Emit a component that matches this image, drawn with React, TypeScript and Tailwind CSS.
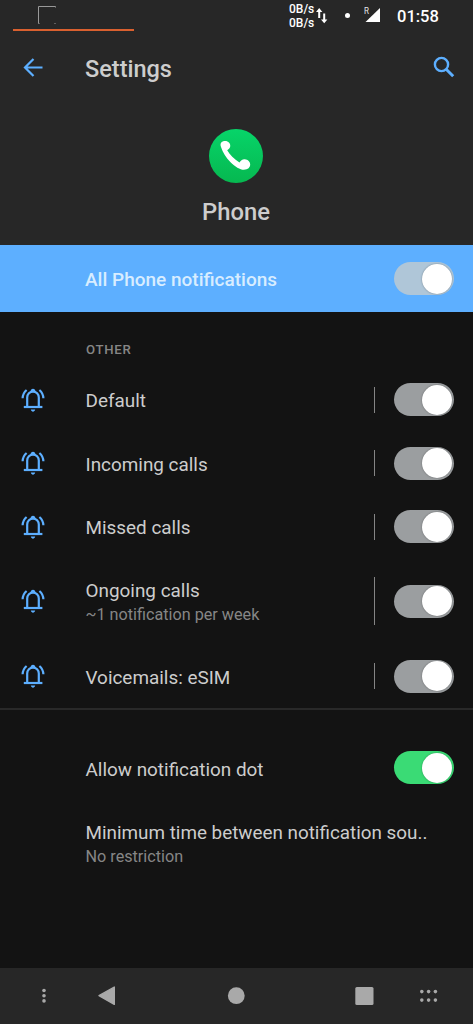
import clsx from "clsx";

interface Channel {
  title: string;
  summary?: string;
}

const channels: Channel[] = [
  { title: "Default" },
  { title: "Incoming calls" },
  { title: "Missed calls" },
  { title: "Ongoing calls", summary: "~1 notification per week" },
  { title: "Voicemails: eSIM" },
];

function Toggle({ track }: { track: string }) {
  return (
    <button
      role="switch"
      aria-checked="true"
      className={clsx("flex h-[33px] w-[60px] shrink-0 items-center justify-end rounded-full pr-[2px]", track)}
    >
      <span className="size-[30px] rounded-full bg-white shadow-[0_0_2px_rgba(0,0,0,0.35)]" />
    </button>
  );
}

function BellIcon() {
  return (
    <svg width="24" height="24" viewBox="0 0 24 24" fill="none" stroke="#5dafff" strokeWidth="2.2">
      <path d="M6.2 19V9.6a5.8 6 0 0 1 11.6 0V19" />
      <path d="M2.8 19h18.6" />
      <path d="M9.8 21.6h4.4c-.3 1.4-1.2 2.1-2.2 2.1s-1.9-.7-2.2-2.1z" fill="#5dafff" stroke="none" />
      <path d="M9.4 4c.2-2 1.2-3.200 2.600-3.200s2.400 1.200 2.600 3.200z" fill="#5dafff" stroke="none" />
      <path d="M1.600 10.200C1.800 6.800 3.200 4 5.600 2M22.400 10.200C22.200 6.800 20.800 4 18.400 2" />
    </svg>
  );
}

function StatusBar() {
  return (
    <div className="flex h-8 items-start text-white">
      <div className="ml-[13px] h-[31px] w-[121px] border-b-2 border-[#d9602f] pt-[6px] pl-[25px]">
        <svg width="18" height="18" viewBox="0 0 18 18" fill="none" stroke="#999" strokeWidth="1">
          <path d="M17.5 1.5V.5H.5v17h1M16.5 17.5h1" />
        </svg>
      </div>
      <div className="ml-[155px] w-[25px] pt-[3px] text-[12px] leading-[13.5px] font-medium">
        <div>0B/s</div>
        <div>0B/s</div>
      </div>
      <svg className="mt-2 ml-[2px]" width="12" height="16" viewBox="0 0 12 16" fill="none" stroke="#fff" strokeWidth="2">
        <path d="M3.2 10V2.500M8.200 5.500V13" />
        <path d="M0 4 3.200 0l3.200 4zM5 11.500l3.200 3.700 3.200-3.700z" fill="#fff" stroke="none" />
      </svg>
      <div className="mt-[13px] ml-[17px] size-[5px] rounded-full bg-white" />
      <div className="mt-[6px] ml-[14px] w-[5px] text-[9.500px] leading-[9px] text-gray-200">
        <span className="inline-block origin-left scale-x-[0.85]">R</span>
      </div>
      <svg className="mt-[8px] -ml-[4px]" width="15" height="15" viewBox="0 0 15 15">
        <path d="M15 0v14H.5z" fill="#fff" />
      </svg>
      <div className="mt-[7px] ml-[17px] text-[16.5px] leading-5 font-medium">01:58</div>
    </div>
  );
}

function ChannelRow({ title, summary }: Channel) {
  return (
    <div className={clsx("flex items-center pr-[19px] pl-[21px]", summary ? "h-[86px]" : "h-[63.5px]")}>
      <BellIcon />
      <div className={clsx("ml-[40.5px] flex-1", summary ? "pt-[4px]" : "pt-[3px]")}>
        <div className="text-[18.9px] leading-6">{title}</div>
        {summary && <div className="text-[16.2px] leading-6 text-[#868686]">{summary}</div>}
      </div>
      <div className={clsx("mr-[19px] w-[1.5px] bg-[#858585]", summary ? "h-12" : "h-[26px]")} />
      <Toggle track="bg-[#9b9ea0]" />
    </div>
  );
}

function NavBar() {
  return (
    <nav className="mt-auto h-[56.5px] bg-[#272727]">
      <svg width="473" height="56" viewBox="0 1 473 56" fill="#a9a9a9">
        {[23.5, 28.7, 33.9].map((y) => (
          <circle key={y} cx="44" cy={y} r="1.8" />
        ))}
        <path d="M99 28.7 114.3 20v17.4z" stroke="#a9a9a9" strokeWidth="1.4" strokeLinejoin="round" />
        <circle cx="236.3" cy="28.7" r="8.4" />
        <rect x="355.3" y="19.9" width="18.2" height="18" rx="1.5" />
        {[421.8, 428.6, 435.4].map((x) => (
          <g key={x}>
            <circle cx={x} cy="24.6" r="1.8" />
            <circle cx={x} cy="33.1" r="1.8" />
          </g>
        ))}
      </svg>
    </nav>
  );
}

export default function App() {
  return (
    <div className="flex h-screen flex-col overflow-hidden bg-[#131313] font-['Roboto',sans-serif] text-[#cdcdcd]">
      <header className="h-[245.4px] shrink-0 bg-[#272727]">
        <StatusBar />
        <div className="flex h-[72px] items-center pr-[18px] pl-[23px]">
          <svg width="20" height="20" viewBox="0 0 20 20" fill="none" stroke="#5dafff" strokeWidth="2.2">
            <path d="M19.5 9.5H2M10.5 1 2 9.5l8.5 8.5" />
          </svg>
          <h1 className="ml-[42px] flex-1 pt-px text-[23.5px] leading-7 font-medium">Settings</h1>
          <svg className="-mt-[3px]" width="22" height="22" viewBox="0 0 22 22" fill="none" stroke="#5dafff" strokeWidth="2.4">
            <circle cx="8.5" cy="8.5" r="6.6" />
            <path d="m13.2 13.2 7 7" strokeWidth="3" />
          </svg>
        </div>
        <div className="flex flex-col items-center pt-[24px]">
          <svg className="mr-[2px]" width="56" height="56" viewBox="0 0 56 56">
            <defs>
              <linearGradient id="dialer" x1="0" y1="0" x2="0" y2="1">
                <stop offset="0" stopColor="#07d469" />
                <stop offset="1" stopColor="#06b850" />
              </linearGradient>
            </defs>
            <circle cx="28" cy="28" r="27" fill="url(#dialer)" />
            <path
              d="M13 19C11.5 15 14 13 17 13c3.5 0 5.8 2.7 5.2 5.4-.3 1.8-1.8 2.8-3 3.8 2.4 4.5 7 9 12.3 12.3 1.1-2.1 3-3.4 5.3-3.2 3.2.2 5.4 2.6 5.4 5.2 0 2.8-2.2 5.2-6.3 5.2-4 0-8.7-2.9-13.6-7.8C17.8 29.5 14.8 24.2 13 19z"
              fill="#fff"
            />
          </svg>
          <div className="mt-[14px] mr-px text-[23.8px] leading-7 font-medium">Phone</div>
        </div>
      </header>

      <div className="flex h-[66.6px] shrink-0 items-center bg-[#5dafff] pr-[19px] pl-[85px]">
        <div className="flex-1 pt-[2px] text-[19px] leading-6 font-medium text-[#d8edff]">All Phone notifications</div>
        <Toggle track="bg-[#afc6d8]" />
      </div>

      <section className="shrink-0 border-b-2 border-[#292929]">
        <h2 className="h-[56px] pt-[28px] pl-[86px] text-[13.2px] leading-5 font-medium tracking-[0.7px] text-[#868686]">
          OTHER
        </h2>
        {channels.map((channel) => (
          <ChannelRow key={channel.title} {...channel} />
        ))}
      </section>

      <section className="shrink-0 pt-[26.5px]">
        <div className="flex h-[63px] items-center pr-[19px] pl-[85.5px]">
          <div className="flex-1 pt-[4px] text-[18.9px] leading-6">Allow notification dot</div>
          <Toggle track="bg-[#3adb75]" />
        </div>
        <div className="pt-[22px] pl-[85.5px]">
          <div className="text-[18.85px] leading-6 whitespace-nowrap">Minimum time between notification sou..</div>
          <div className="text-[16.2px] leading-6 text-[#868686]">No restriction</div>
        </div>
      </section>

      <NavBar />
    </div>
  );
}
